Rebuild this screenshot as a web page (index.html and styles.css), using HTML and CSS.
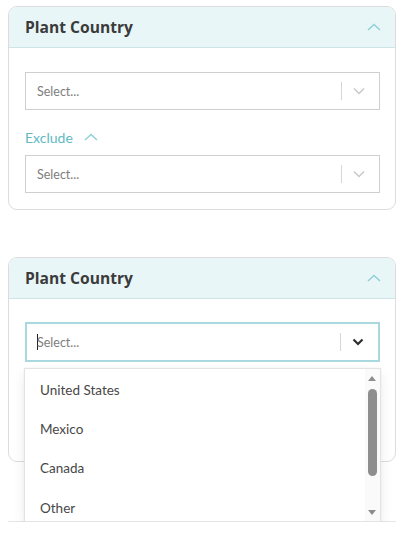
FILE: index.html
```html
<!DOCTYPE html>
<html>
<head>
<meta charset="utf-8">
<link rel="stylesheet" href="styles.css">
</head>
<body>
<div class="page">
  <section class="card">
    <header class="card-head">
      <span class="card-title">Plant Country</span>
      <svg class="chev-up" width="14" height="8" viewBox="0 0 14 8"><path d="M1 7 L7 1.5 L13 7" fill="none" stroke="currentColor" stroke-width="1.5"/></svg>
    </header>
    <div class="card-body">
      <div class="select">
        <span class="placeholder">Select...</span>
        <span class="sep"></span>
        <svg class="chev-down" width="12" height="8" viewBox="0 0 12 8"><path d="M1 1.5 L6 6.5 L11 1.5" fill="none" stroke="currentColor" stroke-width="1.5"/></svg>
      </div>
      <div class="exclude">
        <span>Exclude</span>
        <svg class="chev-ex" width="14" height="8" viewBox="0 0 14 8"><path d="M1 7 L7 1.5 L13 7" fill="none" stroke="currentColor" stroke-width="1.5"/></svg>
      </div>
      <div class="select">
        <span class="placeholder">Select...</span>
        <span class="sep"></span>
        <svg class="chev-down" width="12" height="8" viewBox="0 0 12 8"><path d="M1 1.5 L6 6.5 L11 1.5" fill="none" stroke="currentColor" stroke-width="1.5"/></svg>
      </div>
    </div>
  </section>

  <section class="card card-second">
    <header class="card-head">
      <span class="card-title">Plant Country</span>
      <svg class="chev-up" width="14" height="8" viewBox="0 0 14 8"><path d="M1 7 L7 1.5 L13 7" fill="none" stroke="currentColor" stroke-width="1.5"/></svg>
    </header>
    <div class="card-body">
      <div class="select-wrap">
        <div class="select focused">
          <span class="caret"></span>
          <span class="placeholder">Select...</span>
          <span class="sep"></span>
          <svg class="chev-down dark" width="12" height="8" viewBox="0 0 12 8"><path d="M1.5 1.5 L6 6 L10.5 1.5" fill="none" stroke="currentColor" stroke-width="2.2"/></svg>
        </div>
        <div class="menu">
          <div class="menu-list">
            <div class="option">United States</div>
            <div class="option">Mexico</div>
            <div class="option">Canada</div>
            <div class="option">Other</div>
          </div>
          <div class="scrollbar">
            <span class="arrow-up"></span>
            <span class="thumb"></span>
            <span class="arrow-down"></span>
          </div>
        </div>
      </div>
      <div class="exclude under">
        <span>Exclude</span>
        <svg class="chev-ex" width="14" height="8" viewBox="0 0 14 8"><path d="M1 7 L7 1.5 L13 7" fill="none" stroke="currentColor" stroke-width="1.5"/></svg>
      </div>
      <div class="select under">
        <span class="placeholder">Select...</span>
        <span class="sep"></span>
        <svg class="chev-down" width="12" height="8" viewBox="0 0 12 8"><path d="M1 1.5 L6 6.5 L11 1.5" fill="none" stroke="currentColor" stroke-width="1.5"/></svg>
      </div>
    </div>
  </section>

  <div class="next-section"></div>
</div>
</body>
</html>
```

FILE: styles.css
```css
* { box-sizing: border-box; }

html, body {
  margin: 0;
  padding: 0;
  background: #ffffff;
}

body {
  font-family: Lato, "Open Sans", "Liberation Sans", sans-serif;
  color: #3a3a3a;
}

.page {
  padding: 6px 8px 0 8px;
  width: 404px;
}

.card {
  border: 1px solid #dcdcdc;
  border-radius: 9px;
  background: #ffffff;
}

.card-second {
  margin-top: 47px;
  position: relative;
}

.card-head {
  height: 41px;
  display: flex;
  align-items: center;
  justify-content: space-between;
  padding: 0 14px 0 16px;
  background: #e9f6f8;
  border-bottom: 1px solid #cde4e8;
  border-radius: 8px 8px 0 0;
}

.card-title {
  font-family: "Open Sans", Lato, sans-serif;
  font-size: 15.6px;
  font-weight: 700;
  color: #3b3b3b;
}

.chev-up {
  color: #8fd0d7;
  display: block;
}

.card-body {
  padding: 24px 15px 16px 16px;
}

.select {
  height: 38px;
  border: 1px solid #cfcfcf;
  display: flex;
  align-items: center;
  padding: 0 14px 0 11px;
  background: #fff;
}

.placeholder {
  flex: 1;
  font-size: 12.5px;
  color: #7d7d7d;
}

.sep {
  width: 1px;
  height: 18px;
  background: #d6d6d6;
  margin-right: 11px;
}

.chev-down {
  color: #c9c9c9;
  display: block;
}

.chev-down.dark {
  color: #2e2e2e;
}

.exclude {
  height: 20px;
  margin: 17px 0 8px 0;
  display: flex;
  align-items: center;
  gap: 11px;
  color: #62b9c3;
  font-size: 14px;
}

.chev-ex {
  color: #8fd0d7;
  display: block;
}

.select-wrap {
  position: relative;
}

.select.focused {
  border: 2px solid #a9d9de;
  height: 40px;
  margin-top: -1px;
  padding-left: 10px;
}

.caret {
  width: 1px;
  height: 16px;
  background: #222;
  margin-right: -1px;
}

.menu {
  position: absolute;
  left: -1px;
  right: -1px;
  top: calc(100% + 6px);
  height: 154px;
  background: #fff;
  border: 1px solid #e3e3e3;
  box-shadow: 0 5px 12px rgba(0, 0, 0, 0.08), 0 0 1px rgba(0, 0, 0, 0.1);
  overflow: hidden;
  z-index: 5;
}

.menu-list {
  padding-top: 1px;
}

.option {
  height: 39.3px;
  display: flex;
  align-items: center;
  padding-left: 15px;
  font-size: 13.5px;
  color: #474747;
}

.scrollbar {
  position: absolute;
  top: 0;
  right: 0;
  width: 15px;
  height: 100%;
  background: #fafafa;
}

.arrow-up {
  position: absolute;
  left: 3px;
  top: 7px;
  width: 0;
  height: 0;
  border-left: 4.5px solid transparent;
  border-right: 4.5px solid transparent;
  border-bottom: 5px solid #8d8d8d;
}

.arrow-down {
  position: absolute;
  left: 3px;
  bottom: 6px;
  width: 0;
  height: 0;
  border-left: 4.5px solid transparent;
  border-right: 4.5px solid transparent;
  border-top: 5px solid #8d8d8d;
}

.thumb {
  position: absolute;
  left: 3px;
  top: 20px;
  width: 9px;
  height: 87px;
  border-radius: 4.5px;
  background: #8e8e8e;
}

.under {
  visibility: hidden;
}

.next-section {
  margin-top: 19px;
  height: 41px;
  border-bottom: 1px solid #e6e6e6;
}
```
